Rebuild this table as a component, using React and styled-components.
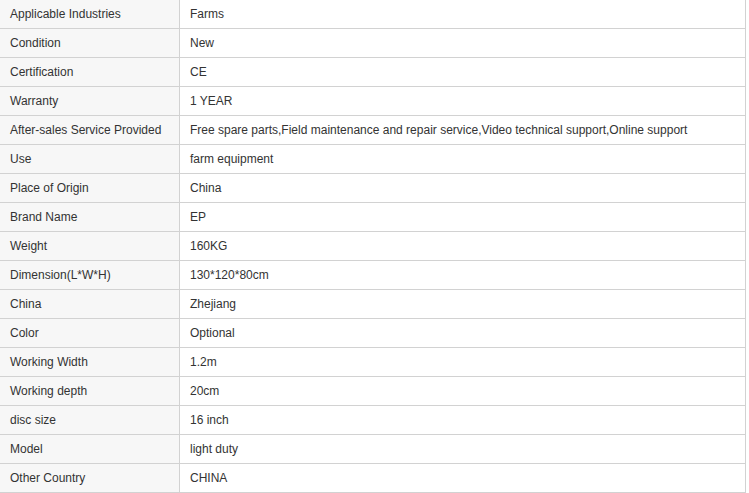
import styled, { createGlobalStyle } from 'styled-components';

const GlobalStyle = createGlobalStyle`
	body {
		margin: 0;
		background: #fff;
		font-family: 'Liberation Sans', Arial, sans-serif;
	}
`;

const Table = styled.table`
	width: 746px;
	border-collapse: collapse;
	table-layout: fixed;
	font-size: 12px;
	color: #333;
`;

const Row = styled.tr`
	height: 29px;

	&:first-child {
		height: 28px;
	}
`;

const Cell = styled.td`
	padding: 0 10px;
	border-bottom: 1px solid #d2d2d2;
	border-right: 1px solid #d2d2d2;
	background: ${(p) => (p.$label ? '#f7f7f7' : '#fff')};
	width: ${(p) => (p.$label ? '159px' : 'auto')};
	white-space: nowrap;
	vertical-align: middle;
`;

const rows = [
	['Applicable Industries', 'Farms'],
	['Condition', 'New'],
	['Certification', 'CE'],
	['Warranty', '1 YEAR'],
	['After-sales Service Provided', 'Free spare parts,Field maintenance and repair service,Video technical support,Online support'],
	['Use', 'farm equipment'],
	['Place of Origin', 'China'],
	['Brand Name', 'EP'],
	['Weight', '160KG'],
	['Dimension(L*W*H)', '130*120*80cm'],
	['China', 'Zhejiang'],
	['Color', 'Optional'],
	['Working Width', '1.2m'],
	['Working depth', '20cm'],
	['disc size', '16 inch'],
	['Model', 'light duty'],
	['Other Country', 'CHINA'],
];

const App = () => {
	return (
		<>
			<GlobalStyle />
			<Table>
				<tbody>
					{rows.map(([k, v]) => (
						<Row key={k}>
							<Cell $label>{k}</Cell>
							<Cell>{v}</Cell>
						</Row>
					))}
				</tbody>
			</Table>
		</>
	);
};

export default App;
